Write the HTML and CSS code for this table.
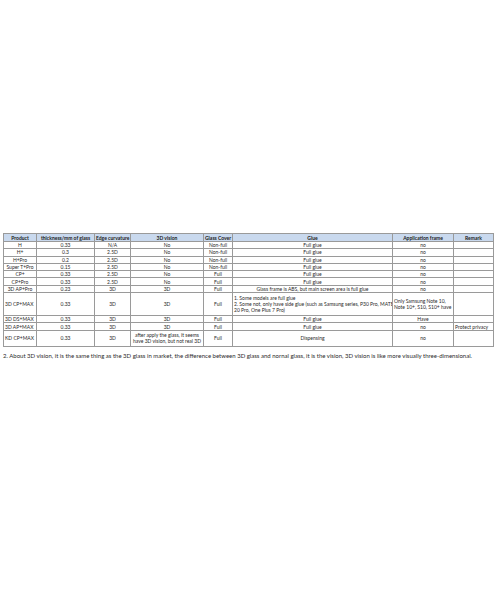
FILE: index.html
```html
<!DOCTYPE html>
<html>
<head>
<meta charset="utf-8">
<link rel="stylesheet" href="styles.css">
</head>
<body>
<div class="page">
<table class="spec">
<colgroup>
<col class="c1"><col class="c2"><col class="c3"><col class="c4"><col class="c5"><col class="c6"><col class="c7"><col class="c8">
</colgroup>
<thead>
<tr><th>Product</th><th>thickness/mm of glass</th><th>Edge curvature</th><th>3D vision</th><th>Glass Cover</th><th>Glue</th><th>Application frame</th><th>Remark</th></tr>
</thead>
<tbody>
<tr><td>H</td><td>0.33</td><td>N/A</td><td>No</td><td>Non-full</td><td>Full glue</td><td>no</td><td></td></tr>
<tr><td>H+</td><td>0.3</td><td>2.5D</td><td>No</td><td>Non-full</td><td>Full glue</td><td>no</td><td></td></tr>
<tr><td>H+Pro</td><td>0.2</td><td>2.5D</td><td>No</td><td>Non-full</td><td>Full glue</td><td>no</td><td></td></tr>
<tr><td>Super T+Pro</td><td>0.15</td><td>2.5D</td><td>No</td><td>Non-full</td><td>Full glue</td><td>no</td><td></td></tr>
<tr><td>CP+</td><td>0.33</td><td>2.5D</td><td>No</td><td>Full</td><td>Full glue</td><td>no</td><td></td></tr>
<tr><td>CP+Pro</td><td>0.33</td><td>2.5D</td><td>No</td><td>Full</td><td>Full glue</td><td>no</td><td></td></tr>
<tr><td>3D AP+Pro</td><td>0.23</td><td>3D</td><td>3D</td><td>Full</td><td>Glass frame is ABS, but main screen area is full glue</td><td>no</td><td></td></tr>
<tr class="tall"><td class="left">3D CP+MAX</td><td>0.33</td><td>3D</td><td>3D</td><td>Full</td><td class="left">1. Some models are full glue<br>2. Some not, only have side glue (such as Samsung series, P30 Pro, MATE<br>20 Pro, One Plus 7 Pro)</td><td class="left">Only Samsung Note 10,<br>Note 10+, S10, S10+ have</td><td></td></tr>
<tr><td class="left">3D DS+MAX</td><td>0.33</td><td>3D</td><td>3D</td><td>Full</td><td>Full glue</td><td>Have</td><td></td></tr>
<tr><td class="left">3D AP+MAX</td><td>0.33</td><td>3D</td><td>3D</td><td>Full</td><td>Full glue</td><td>no</td><td class="left">Protect privacy</td></tr>
<tr class="mid"><td class="left">KD CP+MAX</td><td>0.33</td><td>3D</td><td>after apply the glass, it seems<br>have 3D vision, but not real 3D</td><td>Full</td><td>Dispensing</td><td>no</td><td></td></tr>
</tbody>
</table>
<p class="note">2. About 3D vision, it is the same thing as the 3D glass in market, the difference between 3D glass and nornal glass, it is the vision, 3D vision is like more visually three-dimensional.</p>
</div>
</body>
</html>
```
FILE: styles.css
```css
html, body {
  margin: 0;
  padding: 0;
  background: #ffffff;
}
.page {
  padding: 233px 0 0 3px;
  font-family: Lato, "Liberation Sans", sans-serif;
  color: #2a2a2a;
}
.spec {
  border-collapse: collapse;
  table-layout: fixed;
  width: 490px;
  font-size: 5px;
  line-height: 6px;
}
.c1 { width: 33px; }
.c2 { width: 58px; }
.c3 { width: 36px; }
.c4 { width: 73px; }
.c5 { width: 29px; }
.c6 { width: 160px; }
.c7 { width: 61px; }
.c8 { width: 40px; }
.spec th, .spec td {
  border: 0.6px solid #9a9a9a;
  padding: 0 1px;
  text-align: center;
  vertical-align: middle;
  white-space: nowrap;
  overflow: hidden;
  height: 6.3px;
}
.spec th {
  background: #c9d9ee;
  font-weight: 700;
  height: 7px;
  color: #1a1a1a;
}
.spec td.left {
  text-align: left;
}
.spec tr.tall td {
  height: 22px;
}
.spec tr.mid td {
  height: 15px;
}
.note {
  margin: 5px 0 0 0;
  font-size: 6px;
  line-height: 8px;
  white-space: nowrap;
}
```
